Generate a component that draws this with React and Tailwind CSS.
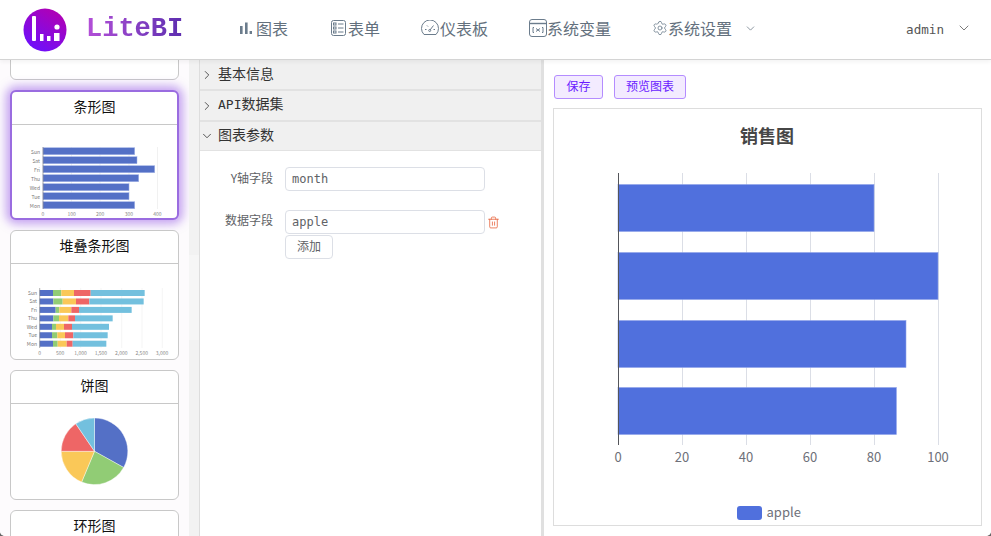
import React from "react";
import { ChevronDown, ChevronRight, Settings, Trash2 } from "lucide-react";

const cn = '"Noto Sans CJK SC", "Liberation Sans", sans-serif';

const navItems = [
  { name: "图表", icon: BarIcon, cls: "gap-[4px] mr-[2px]" },
  { name: "表单", icon: FormIcon, cls: "gap-[2px]" },
  { name: "仪表板", icon: GaugeIcon, cls: "gap-[1px]" },
  { name: "系统变量", icon: VarIcon, cls: "gap-0" },
];

function BarIcon() {
  return (
    <svg width="12" height="12" viewBox="0 0 12 12" fill="#6b7c8c">
      <rect x="0" y="4" width="2.6" height="8" />
      <rect x="5" y="0.5" width="2.6" height="11.5" />
      <rect x="9.6" y="9" width="2.4" height="3" />
    </svg>
  );
}

function FormIcon() {
  return (
    <svg width="15" height="16" viewBox="0 0 15 16" fill="none" stroke="#6b7c8c" strokeWidth="1">
      <rect x="0.5" y="0.5" width="14" height="15" rx="2" />
      <rect x="2.5" y="3" width="2.5" height="2" />
      <rect x="2.5" y="7" width="2.5" height="2" />
      <rect x="2.5" y="11" width="2.5" height="2" />
      <path d="M7 4h5.5M7 8h5.5M7 12h5.5" />
    </svg>
  );
}

function GaugeIcon() {
  return (
    <svg width="18" height="16" viewBox="0 0 18 16" fill="none" stroke="#6b7c8c" strokeWidth="1">
      <path d="M3 14.5h12a8.5 8.5 0 1 0-12 0z" />
      <path d="M9 10l3.5-4.5M4 9.5h1.5M12.5 9.5H14M6 5.5l1 1" />
      <circle cx="8.7" cy="10.5" r="1" />
    </svg>
  );
}

function VarIcon() {
  return (
    <svg width="18" height="18" viewBox="0 0 18 18" fill="none" stroke="#6b7c8c" strokeWidth="1">
      <rect x="0.5" y="0.5" width="17" height="17" rx="2.5" />
      <path d="M0.5 4.5h17" strokeWidth="1.4" />
      <path d="M5 8.5H4v5h1M13 8.5h1v5h-1M7 9.5l4 3M11 9.5l-4 3" />
    </svg>
  );
}

function BarThumb() {
  const rows = [
    ["Sun", 134.7],
    ["Sat", 137],
    ["Fri", 154.7],
    ["Thu", 138.7],
    ["Wed", 129],
    ["Tue", 129],
    ["Mon", 134.7],
  ];
  return (
    <svg width="165" height="93" viewBox="12 125 165 93" className="block">
      {[71.5, 100, 129, 157.5].map((x) => (
        <line key={x} x1={x} x2={x} y1="147" y2="209" stroke="#e8e8e8" strokeWidth="0.6" />
      ))}
      {rows.map(([d, end], i) => (
        <g key={d}>
          <rect x="43" y={147.7 + i * 9} width={end - 43} height="7" fill="#5470c6" stroke="#a3b4e8" strokeWidth="0.5" />
          <text x="40" y={153.5 + i * 9} textAnchor="end" fontSize="5" fill="#777">{d}</text>
        </g>
      ))}
      <line x1="43" x2="43" y1="147" y2="209" stroke="#777" strokeWidth="0.6" />
      {[0, 100, 200, 300, 400].map((v, i) => (
        <text key={v} x={43 + i * 28.6} y="216" textAnchor="middle" fontSize="5" fill="#888">{v}</text>
      ))}
    </svg>
  );
}

function StackThumb() {
  const colors = ["#5470c6", "#91cc75", "#fac858", "#ee6666", "#73c0de"];
  const rows = [
    ["Sun", [119, 159, 184, 222, 272, 434]],
    ["Sat", [119, 160, 188, 228, 268, 431]],
    ["Fri", [119, 167, 178, 214, 237, 395]],
    ["Thu", [119, 160, 177, 205, 225, 338]],
    ["Wed", [119, 156, 168, 192, 216, 327]],
    ["Tue", [119, 156, 172, 195, 220, 323]],
    ["Mon", [119, 159, 173, 200, 218, 319]],
  ];
  return (
    <svg width="167" height="95" viewBox="11 264 167 95" className="block">
      {[60.3, 80.7, 101, 121.7, 142, 162.3].map((x) => (
        <line key={x} x1={x} x2={x} y1="288" y2="348" stroke="#eeeeee" strokeWidth="0.6" />
      ))}
      {rows.map(([d, xs], i) => (
        <g key={d}>
          {colors.map((c, j) => (
            <rect key={c} x={xs[j] / 3} y={290 + i * 8.45} width={(xs[j + 1] - xs[j]) / 3} height="6" fill={c} />
          ))}
          <text x="37" y={295 + i * 8.45} textAnchor="end" fontSize="5" fill="#777">{d}</text>
        </g>
      ))}
      <line x1="39.7" x2="39.7" y1="288" y2="348" stroke="#777" strokeWidth="0.6" />
      {["0", "500", "1,000", "1,500", "2,000", "2,500", "3,000"].map((v, i) => (
        <text key={v} x={39.7 + i * 20.4} y="355" textAnchor="middle" fontSize="5" fill="#888">{v}</text>
      ))}
    </svg>
  );
}

function PieThumb() {
  const cx = 83.5;
  const cy = 47.3;
  const r = 33.3;
  const stops = [0, 119, 202.7, 270, 325.8, 360];
  const colors = ["#5470c6", "#91cc75", "#fac858", "#ee6666", "#73c0de"];
  const pt = (a) => {
    const t = (a * Math.PI) / 180;
    return `${cx + r * Math.sin(t)} ${cy - r * Math.cos(t)}`;
  };
  return (
    <svg width="167" height="96" viewBox="0 0 167 96" className="block">
      {colors.map((c, i) => (
        <path
          key={c}
          d={`M${cx} ${cy}L${pt(stops[i])}A${r} ${r} 0 ${stops[i + 1] - stops[i] > 180 ? 1 : 0} 1 ${pt(stops[i + 1])}Z`}
          fill={c}
          stroke="#fff"
          strokeWidth="0.4"
        />
      ))}
    </svg>
  );
}

function ChartCard({ title, active, children }) {
  return (
    <div
      className={`w-[169px] h-[130px] shrink-0 bg-white rounded-[6px] overflow-hidden ${
        active
          ? "border-2 border-[#9a6ce0] shadow-[0_0_10px_4px_rgba(150,90,230,0.55)]"
          : "border border-[#c8c8c8]"
      }`}
    >
      {title && (
        <div className="h-[33px] pb-[4px] flex items-center justify-center border-b border-[#c8c8c8] text-[14px] text-[#111]">
          {title}
        </div>
      )}
      {children}
    </div>
  );
}

function Section({ title, open, mono }) {
  const Icon = open ? ChevronDown : ChevronRight;
  return (
    <div
      className={`flex items-center bg-[#f0f0f0] text-[14px] text-[#333] ${
        open ? "h-[29px] border-b border-[#e2e2e2]" : "h-[31px] border-b-2 border-[#e2e2e2]"
      }`}
    >
      <Icon className="w-[14px] h-[14px] shrink-0 mr-[4px] text-[#333]" strokeWidth={1.4} />
      <span className="pb-[3px]">
        {mono && <span className="text-[13px] font-['DejaVu_Sans_Mono',monospace]">{mono}</span>}
        {title}
      </span>
    </div>
  );
}

function Field({ value }) {
  return (
    <div className="w-[200px] h-[24px] flex items-center px-[6px] border border-[#dcdfe6] rounded-[4px] bg-white text-[12px] text-[#606266] font-['DejaVu_Sans_Mono',monospace]">
      {value}
    </div>
  );
}

function MainChart() {
  const bars = [
    [184, 80],
    [252, 100],
    [320, 90],
    [387, 87],
  ];
  return (
    <svg width="428" height="416" viewBox="554 109 428 416" className="block">
      <text x="767" y="143" textAnchor="middle" fontSize="18" fontWeight="700" fill="#464646">销售图</text>
      {[682.5, 746.5, 810.5, 874.5, 938.5].map((x) => (
        <line key={x} x1={x} x2={x} y1="173" y2="445" stroke="#dbdee6" />
      ))}
      {bars.map(([y, v]) => (
        <rect key={y} x="618" y={y + 0.5} width={v * 3.2} height="47" fill="#5070dd" stroke="#8fa3ea" strokeWidth="0.6" />
      ))}
      <line x1="618.5" x2="618.5" y1="173" y2="445" stroke="#54555a" />
      {[0, 20, 40, 60, 80, 100].map((v, i) => (
        <text key={v} x={618 + i * 64} y="462" textAnchor="middle" fontSize="13" fill="#6e7079">{v}</text>
      ))}
      <rect x="737" y="506" width="25" height="14" rx="3" fill="#5070dd" />
      <text x="766.5" y="516.5" fontSize="13" fill="#6e7079">apple</text>
    </svg>
  );
}

export default function App() {
  return (
    <div className="h-[536px] overflow-hidden bg-[#666]" style={{ fontFamily: cn }}>
      <div className="h-full flex flex-col bg-white rounded-b-[5px] overflow-hidden">
        {/* top nav */}
        <header className="relative z-10 h-[60px] shrink-0 flex items-center border-b border-[#d4d4d4] bg-white shadow-[0_2px_4px_rgba(0,0,0,0.05)]">
          <svg width="44" height="44" viewBox="0 0 44 44" className="ml-[23px] shrink-0">
            <defs>
              <linearGradient id="logo" x1="0.8" y1="0" x2="0.2" y2="1">
                <stop offset="0" stopColor="#b400b0" />
                <stop offset="1" stopColor="#6a10ff" />
              </linearGradient>
            </defs>
            <circle cx="22" cy="22" r="21.5" fill="url(#logo)" />
            <rect x="9" y="8" width="4" height="25" rx="1" fill="#fff" />
            <rect x="17" y="26" width="3.5" height="7" fill="#fff" />
            <rect x="24" y="28" width="3.5" height="5" fill="#fff" />
            <rect x="31" y="25" width="5.5" height="8" fill="#fff" />
            <circle cx="34" cy="19" r="2.6" fill="#fff" />
          </svg>
          <span
            className="ml-[19px] w-[101px] text-[27px] font-bold leading-none bg-gradient-to-r from-[#b44fd8] to-[#5a2cae] bg-clip-text text-transparent"
            style={{ fontFamily: '"Liberation Mono", monospace' }}
          >
            LiteBI
          </span>
          <nav className="ml-[53px] pb-[3px] flex items-center gap-[41px] text-[16px] text-[#63707d]">
            {navItems.map((item) => {
              const Icon = item.icon;
              return (
                <div key={item.name} className={`flex items-center ${item.cls}`}>
                  <Icon />
                  <span className="pb-[1px]">{item.name}</span>
                </div>
              );
            })}
            <div className="flex items-center">
              <Settings className="w-[16px] h-[16px] text-[#6b7c8c]" strokeWidth={1.2} />
              <span className="pb-[1px]">系统设置</span>
              <ChevronDown className="w-[13px] h-[13px] ml-[12px] text-[#6a7784]" strokeWidth={1.4} />
            </div>
          </nav>
          <span className="ml-[149px] mt-[1px] text-[12.6px] text-[#555] font-['DejaVu_Sans_Mono',monospace]">admin</span>
          <ChevronDown className="w-[16px] h-[16px] ml-[12px] mb-[4px] text-[#666]" strokeWidth={1.3} />
        </header>

        <div className="flex-1 flex min-h-0">
          {/* chart type list */}
          <aside className="w-[189px] shrink-0 bg-[#fdfbfd] overflow-hidden pl-[10px]">
            <div className="flex flex-col gap-[10px] -mt-[110px]">
              <ChartCard />
              <ChartCard title="条形图" active>
                <BarThumb />
              </ChartCard>
              <ChartCard title="堆叠条形图">
                <StackThumb />
              </ChartCard>
              <ChartCard title="饼图">
                <PieThumb />
              </ChartCard>
              <ChartCard title="环形图" />
            </div>
          </aside>
          <div className="w-[11px] shrink-0 bg-[#f2f2f2] border-r border-[#dddddd]">
            <div className="mt-[195px] h-[85px] bg-[#f6f6f6]" />
          </div>

          {/* options panel */}
          <section className="w-[341px] shrink-0 bg-white">
            <Section title="基本信息" />
            <Section title="数据集" mono="API" />
            <Section title="图表参数" open />
            <div className="flex mt-[16px]">
              <div className="w-[73px] pb-[2px] text-right text-[12px] leading-[22px] text-[#606266]">Y轴字段</div>
              <div className="ml-[12px]">
                <Field value="month" />
              </div>
            </div>
            <div className="flex mt-[19px]">
              <div className="w-[73px] text-right text-[12px] leading-[20px] text-[#606266]">数据字段</div>
              <div className="ml-[12px]">
                <div className="flex items-center">
                  <Field value="apple" />
                  <Trash2 className="w-[13px] h-[13px] ml-[2px] text-[#e8653f]" strokeWidth={1.5} />
                </div>
                <div className="mt-px w-[48px] h-[24px] pb-[2px] flex items-center justify-center border border-[#dcdfe6] rounded-[4px] text-[12px] text-[#606266]">
                  添加
                </div>
              </div>
            </div>
          </section>

          {/* preview panel */}
          <section className="flex-1 border-l-[3px] border-[#e0e0e0] bg-white pl-[9px]">
            <div className="flex gap-[11px] mt-[15px] ml-px">
              <div className="w-[49px] h-[24px] pb-[2px] flex items-center justify-center bg-[#f3ebff] border border-[#b48cff] rounded-[3px] text-[12px] text-[#6a1bff]">
                保存
              </div>
              <div className="w-[72px] h-[24px] pb-[2px] flex items-center justify-center bg-[#f3ebff] border border-[#b48cff] rounded-[3px] text-[12px] text-[#6a1bff]">
                预览图表
              </div>
            </div>
            <div className="w-[429px] h-[418px] mt-[9px] border border-[#dddddd] bg-white">
              <MainChart />
            </div>
          </section>
        </div>
      </div>
    </div>
  );
}
